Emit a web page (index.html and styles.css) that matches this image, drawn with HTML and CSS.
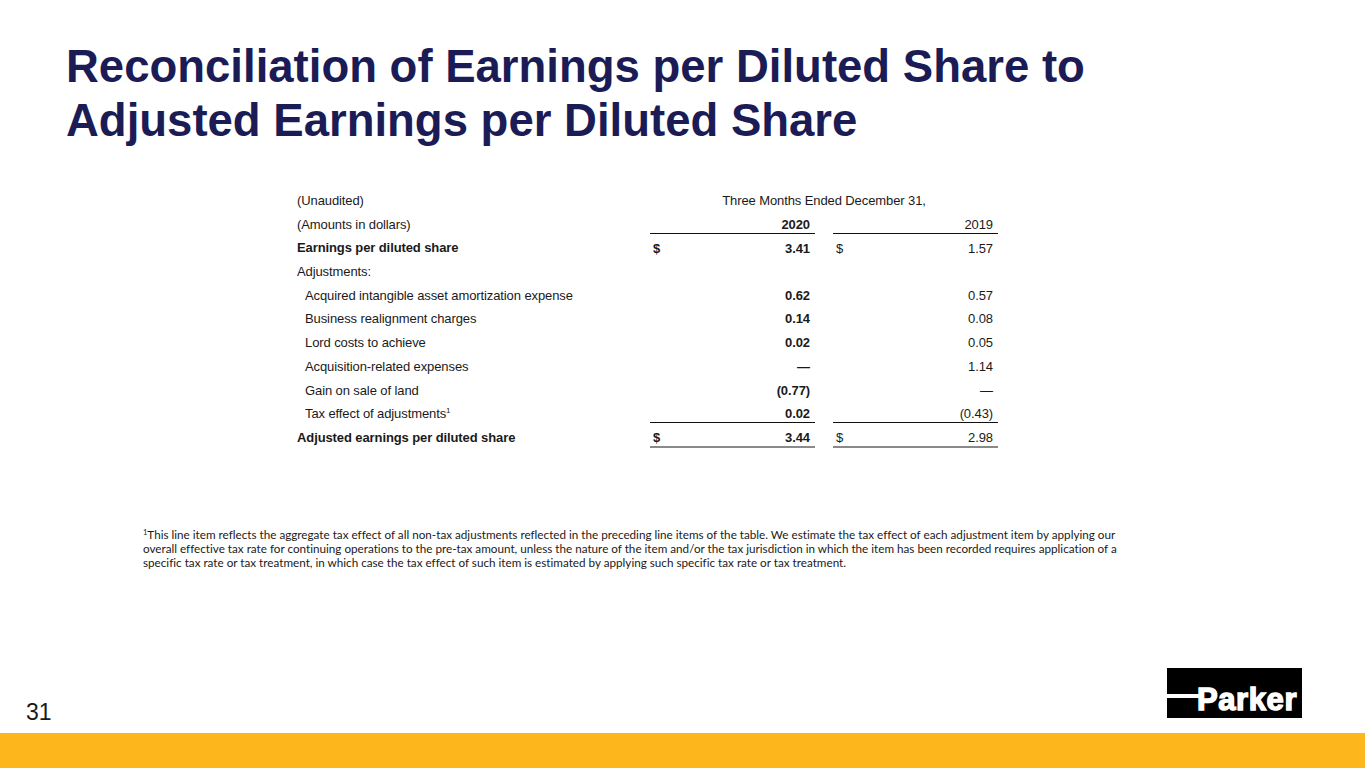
FILE: index.html
```html
<!DOCTYPE html>
<html>
<head>
<meta charset="utf-8">
<link rel="stylesheet" href="styles.css">
</head>
<body>
<div class="slide">
  <h1 class="title">Reconciliation of Earnings per Diluted Share to<br>Adjusted Earnings per Diluted Share</h1>

  <table class="recon">
    <colgroup>
      <col class="c-label"><col class="c-val"><col class="c-gap"><col class="c-val">
    </colgroup>
    <tr>
      <td>(Unaudited)</td>
      <td colspan="3" class="center">Three Months Ended December 31,</td>
    </tr>
    <tr>
      <td>(Amounts in dollars)</td>
      <td class="num bold rule">2020</td>
      <td></td>
      <td class="num rule">2019</td>
    </tr>
    <tr class="bold">
      <td>Earnings per diluted share</td>
      <td class="num"><span class="cur">$</span>3.41</td>
      <td></td>
      <td class="num reg"><span class="cur">$</span>1.57</td>
    </tr>
    <tr>
      <td>Adjustments:</td><td></td><td></td><td></td>
    </tr>
    <tr>
      <td class="ind">Acquired intangible asset amortization expense</td>
      <td class="num bold">0.62</td><td></td><td class="num">0.57</td>
    </tr>
    <tr>
      <td class="ind">Business realignment charges</td>
      <td class="num bold">0.14</td><td></td><td class="num">0.08</td>
    </tr>
    <tr>
      <td class="ind">Lord costs to achieve</td>
      <td class="num bold">0.02</td><td></td><td class="num">0.05</td>
    </tr>
    <tr>
      <td class="ind">Acquisition-related expenses</td>
      <td class="num bold">—</td><td></td><td class="num">1.14</td>
    </tr>
    <tr>
      <td class="ind">Gain on sale of land</td>
      <td class="num bold">(0.77)</td><td></td><td class="num">—</td>
    </tr>
    <tr>
      <td class="ind">Tax effect of adjustments<sup>1</sup></td>
      <td class="num bold">0.02</td><td></td><td class="num">(0.43)</td>
    </tr>
    <tr class="bold total">
      <td>Adjusted earnings per diluted share</td>
      <td class="num top-rule dbl"><span class="cur">$</span>3.44</td>
      <td></td>
      <td class="num reg top-rule dbl"><span class="cur">$</span>2.98</td>
    </tr>
  </table>

  <p class="footnote"><sup>1</sup>This line item reflects the aggregate tax effect of all non-tax adjustments reflected in the preceding line items of the table. We estimate the tax effect of each adjustment item by applying our<br>overall effective tax rate for continuing operations to the pre-tax amount, unless the nature of the item and/or the tax jurisdiction in which the item has been recorded requires application of a<br>specific tax rate or tax treatment, in which case the tax effect of such item is estimated by applying such specific tax rate or tax treatment.</p>

  <div class="footer">
    <span class="page-num">31</span>
    <div class="logo">
      <span class="logo-bar"></span>
      <span class="logo-text">Parker</span>
    </div>
  </div>
  <div class="band"></div>
</div>
</body>
</html>
```

FILE: styles.css
```css
html, body {
  margin: 0;
  padding: 0;
  background: #ffffff;
}

.slide {
  width: 1365px;
  height: 768px;
  display: flex;
  flex-direction: column;
  overflow: hidden;
  font-family: "Liberation Sans", Arial, sans-serif;
  color: #1a1a1a;
}

.title {
  margin: 40px 0 0 66px;
  font-size: 45.5px;
  line-height: 54px;
  font-weight: bold;
  color: #1b1c56;
}

.recon {
  margin: 38px 0 0 297px;
  border-collapse: collapse;
  table-layout: fixed;
  width: 701px;
  font-size: 13px;
  letter-spacing: -0.1px;
}

.c-label { width: 353px; }
.c-val { width: 165px; }
.c-gap { width: 18px; }

.recon td {
  height: 23.7px;
  box-sizing: border-box;
  padding: 7px 0 0 0;
  line-height: 15px;
  vertical-align: top;
  white-space: nowrap;
}

.recon .center { text-align: center; }
.recon .num { text-align: right; padding-right: 5px; }
.recon .cur { float: left; padding-left: 3px; }
.recon .ind { padding-left: 8px; }
.bold { font-weight: bold; }
.bold .reg { font-weight: normal; }
.recon .rule { border-bottom: 1.5px solid #111; }
.recon .top-rule { border-top: 1.5px solid #111; }
.recon .dbl { border-bottom: 2.5px solid #8a8a8a; }
.recon sup { font-size: 8px; vertical-align: 5px; line-height: 0; }

.footnote {
  margin: 79px 0 0 143px;
  font-family: Lato, "Liberation Sans", sans-serif;
  font-size: 11.7px;
  line-height: 14px;
  color: #1a1a1a;
  font-variant-ligatures: none;
}
.footnote sup { font-size: 7.5px; vertical-align: 4px; line-height: 0; }

.footer {
  margin-top: auto;
  display: flex;
  justify-content: space-between;
  align-items: flex-end;
  padding: 0 63px 15px 26px;
}

.page-num {
  font-size: 23px;
  line-height: 23px;
  color: #1a1a1a;
  margin-bottom: -6px;
}

.logo {
  width: 135px;
  height: 50px;
  background: #000;
  display: flex;
  align-items: center;
  overflow: hidden;
}

.logo-bar {
  width: 33px;
  height: 4px;
  background: #fff;
  margin-top: 6px;
  flex: none;
}

.logo-text {
  color: #fff;
  font-family: "Liberation Sans", Arial, sans-serif;
  font-weight: bold;
  font-size: 31px;
  line-height: 31px;
  letter-spacing: 0.6px;
  -webkit-text-stroke: 1.4px #fff;
  margin-left: -3px;
  margin-top: 12px;
}

.band {
  height: 35px;
  background: #fdb71d;
  flex: none;
}
```
